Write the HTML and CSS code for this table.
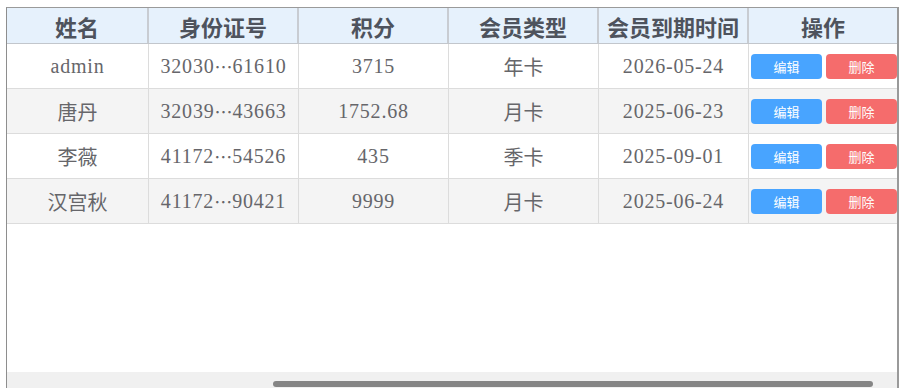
FILE: index.html
```html
<!DOCTYPE html>
<html lang="zh">
<head>
<meta charset="utf-8">
<link rel="stylesheet" href="styles.css">
</head>
<body>
<div class="frame">
  <div class="table">
    <div class="row head">
      <div class="cell">姓名</div>
      <div class="cell">身份证号</div>
      <div class="cell">积分</div>
      <div class="cell">会员类型</div>
      <div class="cell">会员到期时间</div>
      <div class="cell">操作</div>
    </div>
    <div class="row">
      <div class="cell">admin</div>
      <div class="cell">32030<span class="ell">…</span>61610</div>
      <div class="cell">3715</div>
      <div class="cell cn">年卡</div>
      <div class="cell">2026-05-24</div>
      <div class="cell ops"><button class="btn edit">编辑</button><button class="btn del">删除</button></div>
    </div>
    <div class="row alt">
      <div class="cell cn">唐丹</div>
      <div class="cell">32039<span class="ell">…</span>43663</div>
      <div class="cell">1752.68</div>
      <div class="cell cn">月卡</div>
      <div class="cell">2025-06-23</div>
      <div class="cell ops"><button class="btn edit">编辑</button><button class="btn del">删除</button></div>
    </div>
    <div class="row">
      <div class="cell cn">李薇</div>
      <div class="cell">41172<span class="ell">…</span>54526</div>
      <div class="cell">435</div>
      <div class="cell cn">季卡</div>
      <div class="cell">2025-09-01</div>
      <div class="cell ops"><button class="btn edit">编辑</button><button class="btn del">删除</button></div>
    </div>
    <div class="row alt">
      <div class="cell cn">汉宫秋</div>
      <div class="cell">41172<span class="ell">…</span>90421</div>
      <div class="cell">9999</div>
      <div class="cell cn">月卡</div>
      <div class="cell">2025-06-24</div>
      <div class="cell ops"><button class="btn edit">编辑</button><button class="btn del">删除</button></div>
    </div>
  </div>
  <div class="spacer"></div>
  <div class="hscroll"><div class="thumb"></div></div>
</div>
</body>
</html>
```
FILE: styles.css
```css
html, body {
  margin: 0;
  padding: 0;
  background: #ffffff;
}
body {
  padding: 7px 0 0 6px;
  font-family: "Liberation Serif", "Noto Sans CJK SC", serif;
}
.frame {
  width: 890px;
  height: 381px;
  border-top: 1px solid #9a9a9a;
  border-left: 1px solid #8e8e8e;
  border-right: 2px solid #9a9a9a;
  display: flex;
  flex-direction: column;
}
.table {
  display: flex;
  flex-direction: column;
}
.row {
  display: grid;
  grid-template-columns: 142px 150px 150px 150px 150px 148px;
  height: 45px;
  border-bottom: 1px solid #dcdcdc;
  box-sizing: border-box;
  background: #ffffff;
}
.row.alt {
  background: #f4f4f4;
}
.cell {
  box-sizing: border-box;
  border-right: 1px solid #dcdcdc;
  display: flex;
  align-items: center;
  justify-content: center;
  font-size: 20px;
  letter-spacing: 0.8px;
  color: #66666a;
  white-space: nowrap;
}
.cell:last-child {
  border-right: none;
}
.ell {
  font-family: "Noto Sans CJK SC", sans-serif;
  font-size: 18px;
  letter-spacing: 0;
}
.cell.cn {
  font-family: "Noto Sans CJK SC", sans-serif;
  font-size: 20px;
  letter-spacing: 0;
}
.row.head {
  height: 36px;
  background: #e6f1fc;
  border-bottom: 1px solid #c2c6cc;
}
.row.head .cell {
  font-family: "Noto Sans CJK SC", sans-serif;
  font-weight: bold;
  font-size: 22px;
  letter-spacing: 0;
  color: #4e535d;
  border-right: 2px solid #c8ccd2;
}
.row.head .cell:last-child {
  border-right: none;
}
.cell.ops {
  justify-content: flex-start;
  padding-left: 2px;
  gap: 4px;
  letter-spacing: 0;
}
.btn {
  flex: 1;
  height: 25px;
  border: none;
  border-radius: 4px;
  color: #ffffff;
  font-family: "Noto Sans CJK SC", sans-serif;
  font-size: 13px;
  padding: 0;
  line-height: 25px;
}
.btn.edit {
  background: #48a4ff;
}
.btn.del {
  background: #f56c6c;
}
.spacer {
  flex: 1;
}
.hscroll {
  height: 17px;
  background: #f0f0f0;
  box-sizing: border-box;
  padding: 9px 0 0 266px;
}
.thumb {
  width: 600px;
  height: 6px;
  border-radius: 3px;
  background: #858585;
}
```
